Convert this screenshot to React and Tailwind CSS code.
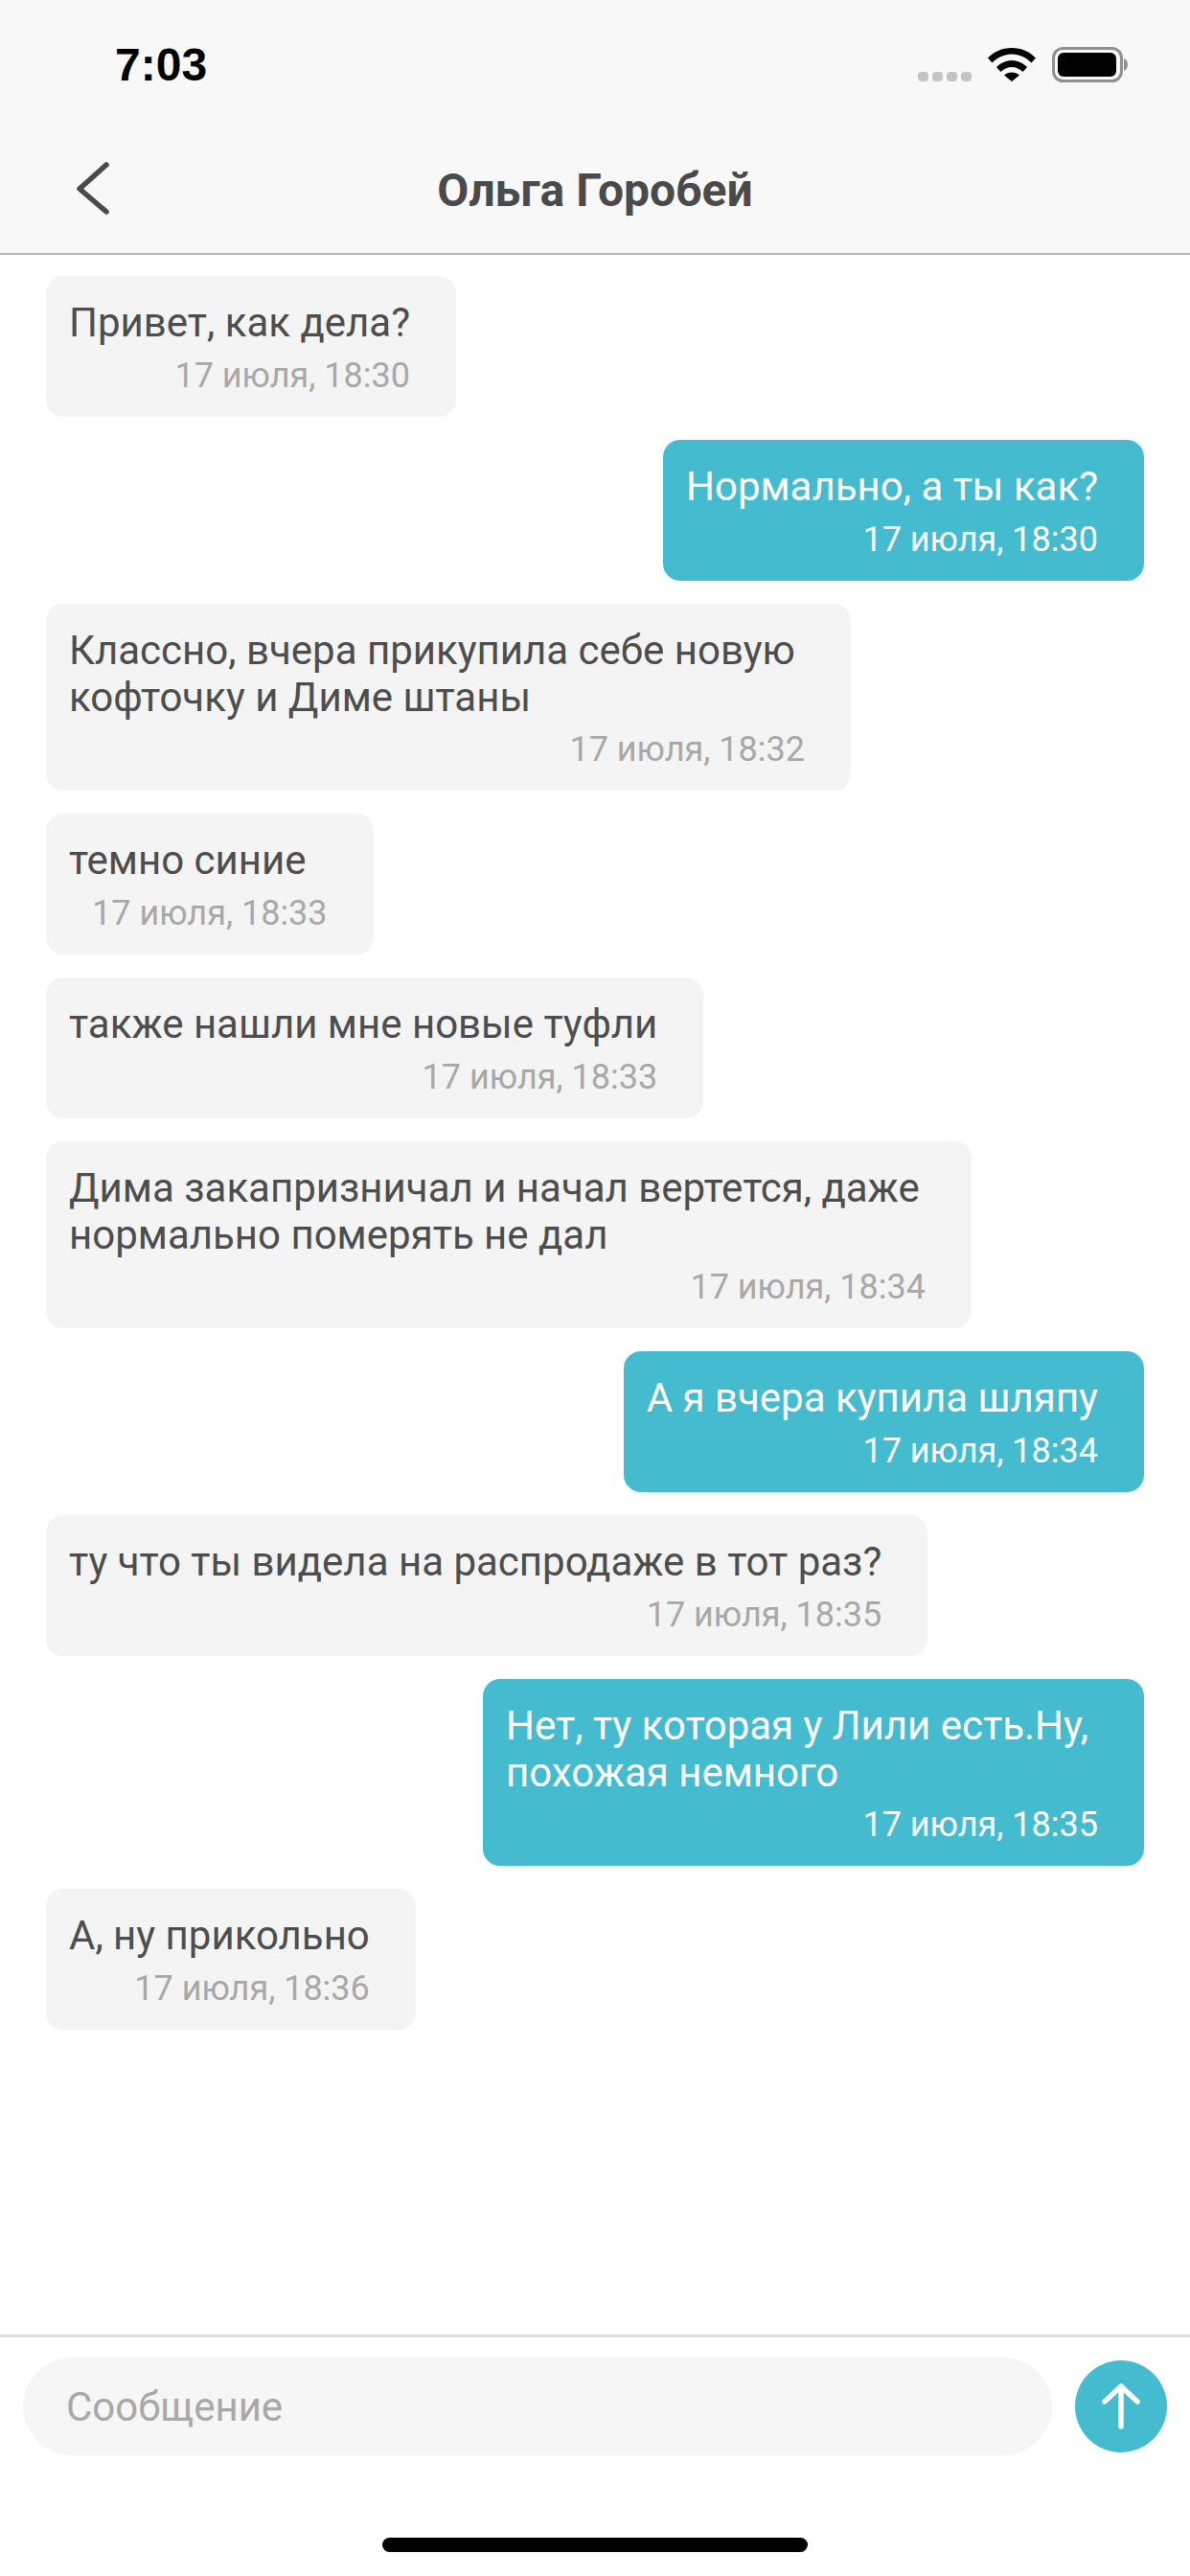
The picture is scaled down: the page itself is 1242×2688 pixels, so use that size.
const font = { fontFamily: 'Roboto, sans-serif' };

const messages = [
  { mine: false, lines: ['Привет, как дела?'], time: '17 июля, 18:30' },
  { mine: true, lines: ['Нормально, а ты как?'], time: '17 июля, 18:30' },
  { mine: false, lines: ['Классно, вчера прикупила себе новую', 'кофточку и Диме штаны'], time: '17 июля, 18:32', width: 'w-[840px]' },
  { mine: false, lines: ['темно синие'], time: '17 июля, 18:33' },
  { mine: false, lines: ['также нашли мне новые туфли'], time: '17 июля, 18:33' },
  { mine: false, lines: ['Дима закапризничал и начал вертется, даже', 'нормально померять не дал'], time: '17 июля, 18:34', width: 'w-[966px]' },
  { mine: true, lines: ['А я вчера купила шляпу'], time: '17 июля, 18:34' },
  { mine: false, lines: ['ту что ты видела на распродаже в тот раз?'], time: '17 июля, 18:35' },
  { mine: true, lines: ['Нет, ту которая у Лили есть.Ну,', 'похожая немного'], time: '17 июля, 18:35', width: 'w-[690px]' },
  { mine: false, lines: ['А, ну прикольно'], time: '17 июля, 18:36' },
];

function Bubble({ mine, lines, time, width }) {
  return (
    <div className={`flex ${mine ? 'justify-end' : 'justify-start'}`}>
      <div className={`${width || ''} rounded-[18px] pl-6 pr-12 pt-[24px] pb-[22px] ${mine ? 'bg-[#45bbcf] text-white' : 'bg-[#f4f4f4] text-[#4d4d4d]'}`}>
        <div className="text-[42px] leading-[49px] whitespace-nowrap">
          {lines.map((l) => <div key={l}>{l}</div>)}
        </div>
        <div className={`${lines.length > 1 ? 'mt-[9px]' : 'mt-[10px]'} pl-6 text-right text-[36px] leading-[42px] whitespace-nowrap ${mine ? 'text-white' : 'text-[#a8a8a8]'}`}>{time}</div>
      </div>
    </div>
  );
}

export default function App() {
  return (
    <div style={font} className="w-[1242px] h-[2688px] bg-white flex flex-col overflow-hidden">
      <header className="h-[266px] shrink-0 bg-[#f8f8f8] border-b-2 border-[#b5b5b5] flex flex-col">
        <div className="h-[132px] shrink-0 flex items-start justify-between pt-[38px] pl-[120px] pr-[65px]">
          <span className="text-[48px] leading-[60px] font-bold text-black" style={{ fontFamily: '"Liberation Sans", sans-serif' }}>7:03</span>
          <div className="flex items-start gap-[17px] pt-[11px]">
            <div className="flex gap-[4px] pt-[26px]">
              {[0, 1, 2, 3].map((i) => <span key={i} className="w-[11px] h-[10px] rounded-[4px] bg-[#c4c4c4]" />)}
            </div>
            <svg width="50" height="36" viewBox="0 0 50 36">
              <path d="M0 11.500C6.500 5 15 1 25 1s18.500 4 25 10.500l-4.500 5C40 11 33 7.500 25 7.500S10 11 4.500 16.500Z" fill="#000" />
              <path d="M9 21c4-4 10-7 16-7s12 3 16 7l-4.500 5c-3-3-7-5-11.500-5s-8.500 2-11.500 5Z" fill="#000" />
              <path d="M17 29.500c2-2 5-3 8-3s6 1 8 3l-8 6.500Z" fill="#000" />
            </svg>
            <svg width="79" height="37" viewBox="0 0 79 37">
              <rect x="1.500" y="1.500" width="71" height="34" rx="10" fill="none" stroke="#8f8f8f" strokeWidth="3" />
              <rect x="6" y="6" width="61" height="25" rx="6" fill="#000" />
              <path d="M75 12c2.500 .8 4 3.300 4 6.500s-1.500 5.700-4 6.500Z" fill="#8f8f8f" />
            </svg>
          </div>
        </div>
        <div className="relative flex-1 flex items-center justify-center pt-[2px]">
          <svg width="40" height="60" viewBox="0 0 40 60" className="absolute left-[78px] top-[36px]">
            <path d="M33 4 L5 29 L33 53" fill="none" stroke="#4a4a4a" strokeWidth="5.500" strokeLinecap="round" strokeLinejoin="round" />
          </svg>
          <h1 className="text-[48px] leading-[56px] font-bold text-[#4a4a4a]">Ольга Горобей</h1>
        </div>
      </header>

      <main className="flex-1 flex flex-col gap-[24px] pt-[22px] px-[48px]">
        {messages.map((m, i) => <Bubble key={i} {...m} />)}
      </main>

      <footer className="h-[252px] shrink-0 border-t-[3px] border-[#dedede] flex flex-col">
        <div className="flex items-center gap-[24px] pl-[24px] pr-[24px] pt-[21px]">
          <div className="h-[102px] flex-1 rounded-full bg-[#f6f6f6] flex items-center pl-[45px] text-[42px] text-[#a8a8a8]">Сообщение</div>
          <div className="w-[96px] h-[96px] rounded-full bg-[#45bbcf] flex items-center justify-center">
            <svg width="48" height="52" viewBox="0 0 48 52">
              <path d="M24 47V5M7 21 24 5l17 16" fill="none" stroke="#fff" strokeWidth="5.500" strokeLinecap="round" strokeLinejoin="round" />
            </svg>
          </div>
        </div>
        <div className="mt-[86px] mx-auto w-[444px] h-[15px] rounded-full bg-black" />
      </footer>
    </div>
  );
}
